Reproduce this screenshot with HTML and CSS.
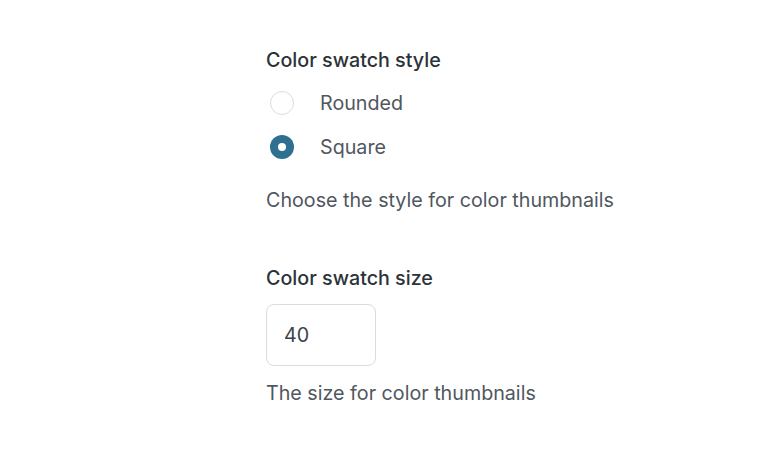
FILE: index.html
```html
<!DOCTYPE html>
<html lang="en">
<head>
<meta charset="utf-8">
<link rel="stylesheet" href="styles.css">
</head>
<body>
<main class="settings">
  <section class="field">
    <h2 class="field-label">Color swatch style</h2>
    <div class="radio-group">
      <label class="radio">
        <span class="radio-control"></span>
        <span class="radio-text">Rounded</span>
      </label>
      <label class="radio">
        <span class="radio-control is-checked"></span>
        <span class="radio-text">Square</span>
      </label>
    </div>
    <p class="field-help">Choose the style for color thumbnails</p>
  </section>
  <section class="field">
    <h2 class="field-label">Color swatch size</h2>
    <div class="number-input">40</div>
    <p class="field-help field-help--tight">The size for color thumbnails</p>
  </section>
</main>
</body>
</html>
```
FILE: styles.css
```css
html, body {
  margin: 0;
  padding: 0;
  background: #ffffff;
}
body {
  font-family: Inter, "Noto Sans", sans-serif;
  -webkit-font-smoothing: antialiased;
}
.settings {
  padding: 46px 0 0 266px;
  display: flex;
  flex-direction: column;
  gap: 51px;
}
.field {
  display: flex;
  flex-direction: column;
}
.field-label {
  margin: 0;
  font-size: 19.7px;
  font-weight: 500;
  line-height: 28px;
  color: #2c3338;
}
.radio-group {
  display: flex;
  flex-direction: column;
  gap: 20px;
  margin-top: 17px;
}
.radio {
  display: flex;
  align-items: center;
  gap: 26px;
  padding-left: 4px;
  height: 24px;
}
.radio-control {
  box-sizing: border-box;
  width: 24px;
  height: 24px;
  border-radius: 50%;
  border: 1px solid #dcdcde;
  background: #fff;
  display: flex;
  align-items: center;
  justify-content: center;
}
.radio-control.is-checked {
  border: none;
  background: #2f6f8f;
}
.radio-control.is-checked::after {
  content: "";
  width: 8px;
  height: 8px;
  border-radius: 50%;
  background: #fff;
}
.radio-text {
  font-size: 19.7px;
  color: #50575e;
  line-height: 24px;
}
.field-help {
  margin: 28px 0 0;
  font-size: 19.7px;
  line-height: 26px;
  color: #50575e;
}
.number-input {
  box-sizing: border-box;
  margin-top: 12px;
  width: 110px;
  height: 62px;
  border: 1px solid #dcdcde;
  border-radius: 8px;
  padding: 0 17px;
  display: flex;
  align-items: center;
  font-size: 19.7px;
  color: #3c434a;
}
.field-help--tight {
  margin-top: 14px;
}
```
